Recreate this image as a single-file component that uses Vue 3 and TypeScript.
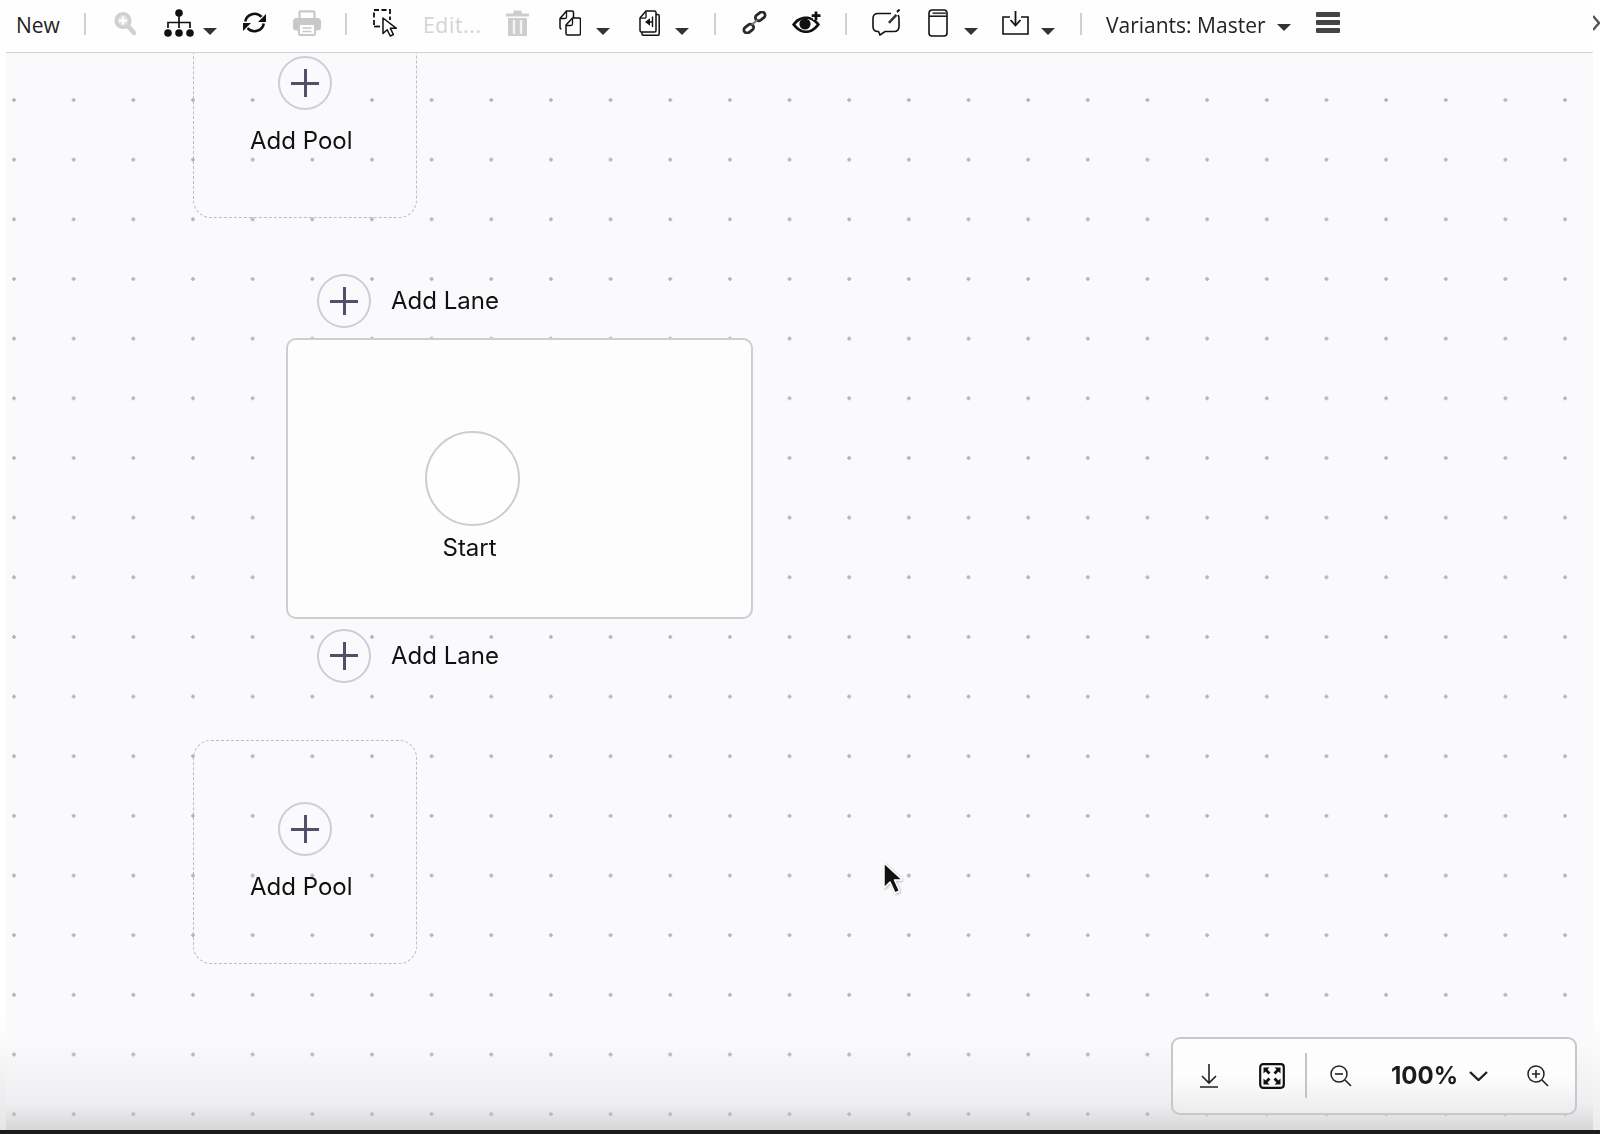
<script setup lang="ts">
const addPools = [
  { cls: 'pool-a' },
  { cls: 'pool-b' },
]
const addLanes = [
  { cls: 'lane-a' },
  { cls: 'lane-b' },
]
</script>

<template>
  <div class="root">
    <div class="main">
      <div class="strip-l"></div>
      <div class="center">
        <div class="toolbar">
          <span class="lbl new">New</span>
          <i class="sep s1"></i>
          <svg class="ic search" viewBox="0 0 22 24"><circle cx="9" cy="9.500" r="7" fill="#dedede" stroke="#cfcfcf" stroke-width="3.200"/><path d="M14 15l6 7" stroke="#d0d0d0" stroke-width="4.500" stroke-linecap="round"/><path d="M9 5.500v8M5 9.500h8" stroke="#fff" stroke-width="2.400"/></svg>
          <svg class="ic org" viewBox="0 0 30 28"><circle cx="15" cy="4" r="3.800"/><path d="M15 7v6M4 19v-5.500h22V19M15 13v6" fill="none" stroke="#111" stroke-width="1.700"/><circle cx="4" cy="24" r="3.800"/><circle cx="15" cy="24" r="3.800"/><circle cx="26" cy="24" r="3.800"/></svg>
          <i class="caret c-org"></i>
          <svg class="ic refresh" viewBox="0 0 25 23"><path d="M3.200 10.500A9.500 9.500 0 0 1 19.500 5.800" fill="none" stroke="#111" stroke-width="2.600"/><path d="M24 3v8h-8z" fill="#111"/><path d="M21.800 12.500A9.500 9.500 0 0 1 5.500 17.200" fill="none" stroke="#111" stroke-width="2.600"/><path d="M1 20v-8h8z" fill="#111"/></svg>
          <svg class="ic print" viewBox="0 0 28 26"><path d="M6.500 9V2.500q0-1.200 1.200-1.200h12.600q1.200 0 1.200 1.200V9" fill="none" stroke="#c8c8c8" stroke-width="2.200"/><rect y="8" width="28" height="12.500" rx="3.500" fill="#c8c8c8"/><rect x="6" y="14" width="16" height="11" rx="1.500" fill="#fff" stroke="#c8c8c8" stroke-width="2"/><path d="M9.500 18h9M9.500 21.500h9" stroke="#c8c8c8" stroke-width="1.500"/></svg>
          <i class="sep s2"></i>
          <svg class="ic select" viewBox="0 0 24 28"><path d="M1 16V1h16v10" fill="none" stroke="#111" stroke-width="1.800" stroke-dasharray="5 2.500"/><path d="M1 17.500h6" stroke="#111" stroke-width="1.800"/><path d="M10 9v15.500l4.200-3.800 3 6.300 3.200-1.500-3-6.200h6z" fill="#fff" stroke="#111" stroke-width="1.500" stroke-linejoin="round"/></svg>
          <span class="lbl edit">Edit...</span>
          <svg class="ic trash" viewBox="0 0 23 26"><path d="M0 3.500h23v3H0zM7 3.500L8 .5h7l1 3z" fill="#cdcdcd"/><path d="M2 8h19v18H2z" fill="#cdcdcd"/><path d="M8 10v14M15 10v14" stroke="#f4f4f4" stroke-width="2.400"/></svg>
          <svg class="ic copy" viewBox="0 0 22 26"><path d="M2.500 19Q1 19 1 17V8.500L7.500 1H13q1.500 0 1.500 2v5" fill="#fff" stroke="#111" stroke-width="1.500" stroke-linejoin="round"/><path d="M7.500 1.500V7q0 1.500-1.500 1.500H1" fill="none" stroke="#111" stroke-width="1.300"/><path d="M8.500 25q-1.500 0-1.500-1.500V15l6.500-7h6.500q1.500 0 1.500 1.500v14q0 1.500-1.500 1.500z" fill="#fff" stroke="#111" stroke-width="1.500" stroke-linejoin="round"/><path d="M13.500 8.500V14q0 1.500-1.500 1.500H7" fill="none" stroke="#111" stroke-width="1.300"/></svg>
          <i class="caret c-copy"></i>
          <svg class="ic paste" viewBox="0 0 21 26"><path d="M3 22v2q0 1.200 1.200 1.200h15q1 0 1-1.200V6q0-1.500-1.500-1.500H17" fill="none" stroke="#111" stroke-width="1.500"/><path d="M2.500 22Q1 22 1 20.500V8l6-7h8.500Q17 1 17 2.500v18q0 1.500-1.500 1.500z" fill="#fff" stroke="#111" stroke-width="1.500" stroke-linejoin="round"/><path d="M7 1.500V7q0 1.200-1.200 1.200H1" fill="none" stroke="#111" stroke-width="1.300"/><path d="M13.500 6.500V17M14 12H8" stroke="#111" stroke-width="1.400"/><path d="M6 12l5-3.800v7.600z" fill="#111"/></svg>
          <i class="caret c-paste"></i>
          <i class="sep s3"></i>
          <svg class="ic link" viewBox="0 0 25 23"><g fill="none" stroke="#2a2a2a" stroke-width="2.800"><rect x="13" y="2.200" width="10.500" height="6.400" rx="3.200" transform="rotate(-38 18.250 5.400)"/><rect x="1.500" y="14.400" width="10.500" height="6.400" rx="3.200" transform="rotate(-38 6.750 17.600)"/></g><path d="M9.500 13.800l6-4.800" stroke="#777" stroke-width="2"/></svg>
          <svg class="ic eye" viewBox="0 0 30 23"><path d="M1 13.500C5 7.500 10 5.500 15 5.500s10 2 14 8c-4 6-9 8.500-14 8.500S5 19.500 1 13.500z" fill="#111"/><path d="M4.500 13.500C8 9.500 11 8 15 8s7 1.500 10.500 5.500C22 17.500 19 19.500 15 19.500s-7-2-10.500-6z" fill="#fff"/><circle cx="14" cy="13" r="5.600" fill="#111"/><path d="M25 0v9M20.500 4.500h9" stroke="#fff" stroke-width="5.500"/><path d="M25 .5v8.500M20.700 4.700h8.800" stroke="#111" stroke-width="2.800"/></svg>
          <i class="sep s4"></i>
          <svg class="ic comment" viewBox="0 0 28 27"><path d="M19 4.500H6Q1 4.500 1 9.500v8q0 5 5 5h.5l1.500 3.500 5-3.500h9q5 0 5-5v-8q0-2-1-3.500" fill="none" stroke="#111" stroke-width="1.600"/><path d="M16 13l7.500-8 1.800 1.800-7.500 8z" fill="#333"/><path d="M25 3l2.500-2.500" stroke="#111" stroke-width="2"/></svg>
          <svg class="ic book" viewBox="0 0 20 28"><path d="M1 4.500Q1 1 4.500 1H16q3 0 3 3v20q0 3-3 3H4q-3 0-3-3z" fill="none" stroke="#111" stroke-width="1.600"/><path d="M1 7.200h18" stroke="#111" stroke-width="1.500"/><path d="M4.500 4.200h14.500" stroke="#444" stroke-width="1.800"/></svg>
          <i class="caret c-book"></i>
          <svg class="ic import" viewBox="0 0 27 24"><path d="M8 6H1v17h25V6h-7" fill="none" stroke="#111" stroke-width="1.600"/><path d="M13.500 0v13" stroke="#111" stroke-width="1.800"/><path d="M8.500 9l5 5.500 5-5.500" fill="none" stroke="#111" stroke-width="1.800"/></svg>
          <i class="caret c-import"></i>
          <i class="sep s5"></i>
          <span class="lbl variants">Variants: Master</span>
          <i class="caret c-var"></i>
          <div class="menu"><i></i><i></i><i></i></div>
        </div>

        <div class="canvas">
          <div v-for="p in addPools" :key="p.cls" class="add-pool" :class="p.cls">
            <div class="plus"><span></span></div>
            <div class="txt pool-txt">Add Pool</div>
          </div>
          <div v-for="l in addLanes" :key="l.cls" class="add-lane" :class="l.cls">
            <div class="plus"><span></span></div>
            <div class="txt">Add Lane</div>
          </div>
          <div class="pool">
            <div class="start-circle"></div>
            <div class="txt start-txt">Start</div>
          </div>
          <svg class="cursor" viewBox="0 0 20 34"><path d="M2 1v25l6-6 5 11 4.500-2-5-11h8z" fill="#111" stroke="#fff" stroke-width="1.500" stroke-linejoin="round"/></svg>

          <div class="shade"></div>

          <div class="zoombar">
            <svg class="z dl" viewBox="0 0 20 25"><path d="M10 1v19M3 13l7 7 7-7M1 24h18" fill="none" stroke="#222" stroke-width="1.600"/></svg>
            <svg class="z fit" viewBox="0 0 26 26"><rect x="1.200" y="1.200" width="23.600" height="23.600" rx="3" fill="none" stroke="#111" stroke-width="2.200"/><path d="M4.500 10.500v-6h6L8.500 6.500l3 3-2 2-3-3zM21.500 10.500v-6h-6l2 2-3 3 2 2 3-3zM4.500 15.500v6h6l-2-2 3-3-2-2-3 3zM21.500 15.500v6h-6l2-2-3-3 2-2 3 3z" fill="#111"/></svg>
            <i class="zsep"></i>
            <svg class="z zout" viewBox="0 0 22 22"><circle cx="9" cy="9" r="8" fill="none" stroke="#222" stroke-width="1.500"/><path d="M15 15l6 6" stroke="#222" stroke-width="1.600"/><path d="M5 9h8" stroke="#222" stroke-width="1.600"/></svg>
            <span class="pct">100%</span>
            <svg class="chev" viewBox="0 0 19 10"><path d="M1 1l8.500 8L18 1" fill="none" stroke="#222" stroke-width="2.400"/></svg>
            <svg class="z zin" viewBox="0 0 22 22"><circle cx="9" cy="9" r="8" fill="none" stroke="#222" stroke-width="1.500"/><path d="M15 15l6 6" stroke="#222" stroke-width="1.600"/><path d="M5 9h8M9 5v8" stroke="#222" stroke-width="1.600"/></svg>
          </div>
        </div>
      </div>
      <div class="strip-r">
        <svg class="rchev" viewBox="0 0 7 16"><path d="M0 1l6 7-6 7" fill="none" stroke="#555" stroke-width="2.400"/></svg>
      </div>
    </div>
    <div class="base"></div>
  </div>
</template>

<style>
html, body { margin: 0; background: #fff; }
</style>

<style scoped>
.root { width: 1600px; height: 1134px; display: flex; flex-direction: column; overflow: hidden; filter: blur(0.35px); }
.main { flex: 1; display: flex; min-height: 0; }
.base { height: 4px; background: #1c1c1c; }
.strip-l { width: 6px; background: linear-gradient(#fff 90%, #e6e6e6); }
.strip-r { width: 7px; background: linear-gradient(#fff 90%, #ececec); padding-top: 15px; box-sizing: border-box; }
.rchev { display: block; width: 7px; height: 16px; }
.center { flex: 1; display: flex; flex-direction: column; min-width: 0; }

.toolbar { box-sizing: content-box; padding: 0 0 6px 10px; height: 45.500px; border-bottom: 1.500px solid #d4d4d4; display: flex; align-items: center; background: #fefefe; flex: none; }
.lbl { font-family: "Open Sans", "Liberation Sans", sans-serif; font-size: 21px; color: #222; white-space: nowrap; line-height: 28px; margin-top: 5px; }
.new { width: 43px; }
.edit { width: 56px; color: #d4d4d4; margin-left: 26px; letter-spacing: 0.7px; }
.variants { width: 160px; margin-left: 24px; }
.sep { display: block; width: 2px; height: 22px; background: #d0d0d0; flex: none; margin-top: 3px; }
.s1 { margin-left: 25px; }
.s2 { margin-left: 24px; }
.s3 { margin-left: 25px; }
.s4 { margin-left: 24px; }
.s5 { margin-left: 25px; }
.ic { display: block; flex: none; }
.search { width: 22px; height: 24px; margin-left: 28px; }
.org { width: 30px; height: 28px; margin-left: 28px; fill: #111; }
.refresh { width: 25px; height: 23px; margin-left: 25px; }
.print { width: 28px; height: 26px; margin-left: 26px; }
.select { width: 24px; height: 28px; margin-left: 26px; }
.trash { width: 23px; height: 26px; margin-left: 27px; }
.copy { width: 22px; height: 26px; margin-left: 30px; }
.paste { width: 21px; height: 26px; margin-left: 29px; }
.link { width: 25px; height: 23px; margin-left: 26px; }
.eye { width: 30px; height: 23px; margin-left: 24px; }
.comment { width: 28px; height: 27px; margin-left: 25px; }
.book { width: 20px; height: 28px; margin-left: 28px; }
.import { width: 27px; height: 24px; margin-left: 24px; }

.caret { display: block; flex: none; width: 0; height: 0; border-left: 7.500px solid transparent; border-right: 7.500px solid transparent; border-top: 7px solid #333; margin-top: 17px; }
.c-org { margin-left: 9px; }
.c-copy { margin-left: 15px; }
.c-paste { margin-left: 15px; }
.c-book { margin-left: 16px; }
.c-import { margin-left: 12px; }
.c-var { margin-left: 11px; margin-top: 9px; }
.menu { margin-left: 25px; width: 24px; display: flex; flex-direction: column; gap: 3px; flex: none; }
.menu i { display: block; height: 5px; background: #444; border-radius: 1px; }

.canvas { flex: 1; position: relative; overflow: hidden; background-color: #fafafd;
  background-image: radial-gradient(circle at 2px 2px, #b4b4ba 1.500px, transparent 2.100px);
  background-size: 59.67px 59.67px; background-position: 6px 45px; }

/* canvas nodes: canvas origin is (6, 53) */
.add-pool { position: absolute; left: 187px; width: 224px; height: 224px; box-sizing: border-box; border: 1.500px dashed #bcbcc4; border-radius: 18px; }
.pool-a { top: -59px; }
.pool-b { top: 687px; }
.plus { width: 54px; height: 54px; box-sizing: border-box; border: 2px solid #cdcdd4; border-radius: 50%; background: #fafafd; position: relative; }
.plus span { position: absolute; inset: 0; }
.plus span::before, .plus span::after { content: ""; position: absolute; background: #505168; }
.plus span::before { left: 11px; right: 11px; top: 23.500px; height: 3px; }
.plus span::after { top: 11px; bottom: 11px; left: 23.500px; width: 3px; }
.add-pool .plus { position: absolute; left: 84px; top: 61.500px; }
.txt { font-family: Inter, "Liberation Sans", sans-serif; font-size: 24px; line-height: 28px; color: #111; white-space: nowrap; }
.pool-txt { position: absolute; left: 56px; top: 132.500px; }
.add-lane { position: absolute; left: 311px; display: flex; align-items: center; gap: 20px; }
.lane-a { top: 221.500px; }
.lane-b { top: 576px; }
.pool { position: absolute; left: 279.500px; top: 285px; width: 467.500px; height: 281.500px; box-sizing: border-box; border: 2px solid #cdcdd4; border-radius: 10px; background: #fdfdfe; }
.start-circle { position: absolute; left: 137px; top: 91.500px; width: 95px; height: 95px; box-sizing: border-box; border: 2px solid #cdcdd0; border-radius: 50%; background: #fefefe; }
.start-txt { position: absolute; left: 155px; top: 194px; }
.cursor { position: absolute; left: 876px; top: 809px; width: 20px; height: 34px; filter: drop-shadow(1px 1px 1px rgba(0,0,0,.25)); }

.shade { position: absolute; left: 0; right: 0; bottom: 0; height: 90px; background: linear-gradient(rgba(200,200,205,0), rgba(200,200,205,.22) 70%, rgba(190,190,190,.6)); pointer-events: none; z-index: 1; }

.zoombar { position: absolute; z-index: 2; left: 1165px; top: 984px; width: 406px; height: 78px; box-sizing: border-box; border: 2px solid #c8c8cc; border-radius: 9px; background: linear-gradient(#fdfdfd 50%, #ececec); display: flex; align-items: center; }
.z { display: block; flex: none; }
.dl { width: 20px; height: 25px; margin-left: 26px; }
.fit { width: 26px; height: 26px; margin-left: 40px; }
.zsep { display: block; width: 2px; height: 45px; background: #c4c4c4; margin-left: 20px; flex: none; }
.zout { width: 22px; height: 22px; margin-left: 23px; }
.pct { font-family: Inter, "Liberation Sans", sans-serif; font-weight: 700; font-size: 24px; color: #1c1c1c; margin-left: 39px; width: 68px; white-space: nowrap; }
.chev { width: 19px; height: 10px; margin-left: 10px; flex: none; }
.zin { width: 22px; height: 22px; margin-left: 39px; }
</style>
